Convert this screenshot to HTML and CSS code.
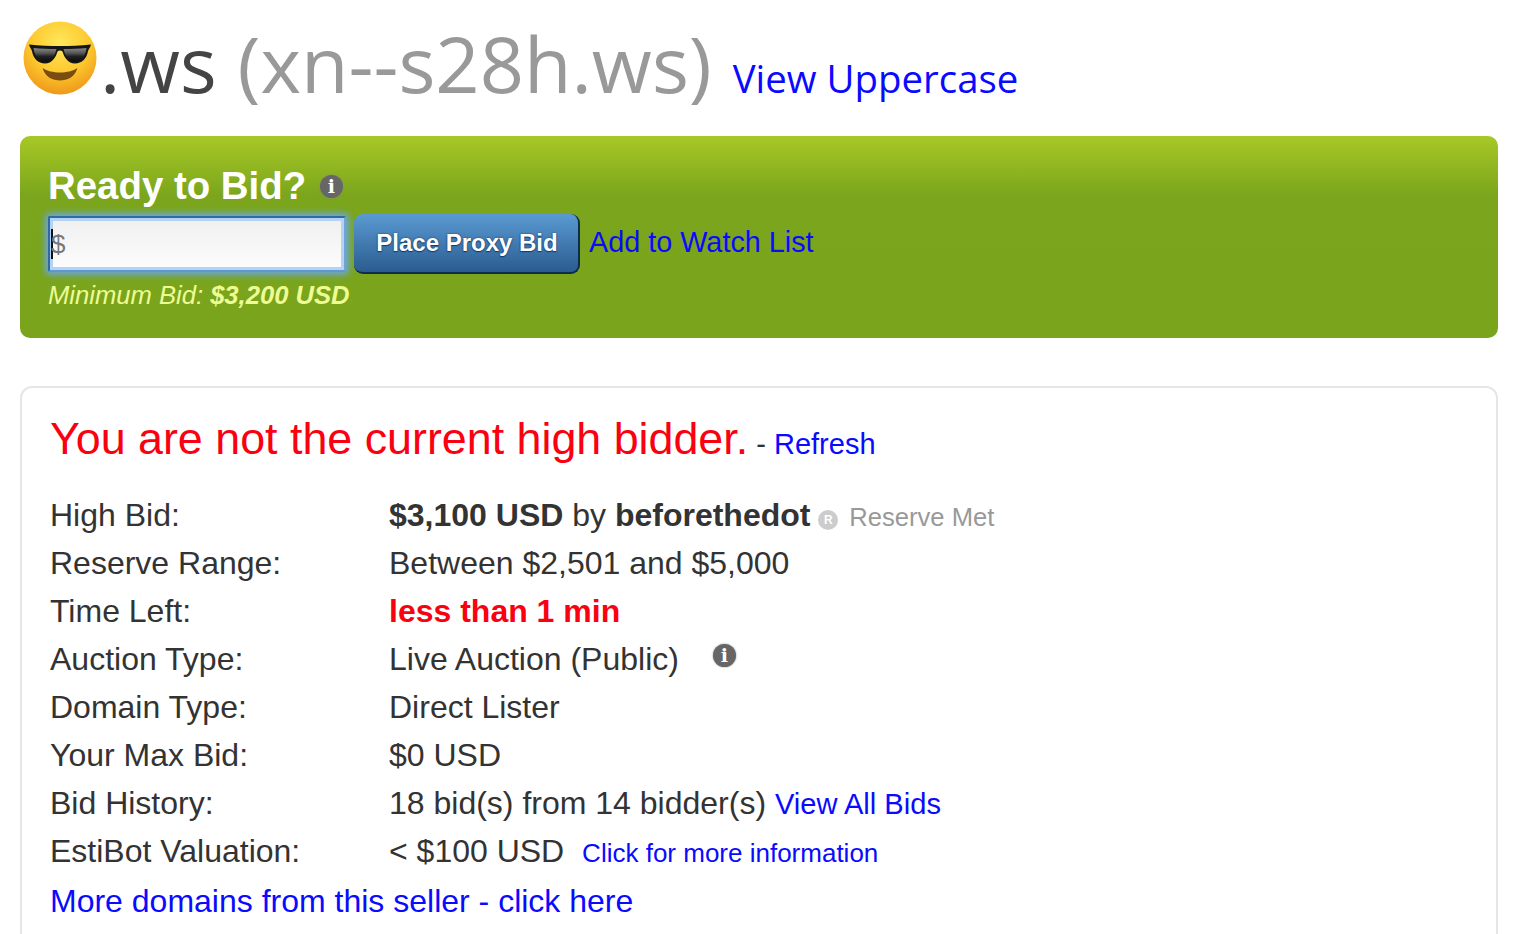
FILE: index.html
```html
<!DOCTYPE html>
<html lang="en">
<head>
<meta charset="utf-8">
<title>.ws auction</title>
<link rel="stylesheet" href="styles.css">
</head>
<body>
<h1 class="title">
  <svg class="emoji" viewBox="0 0 76 76" width="76" height="76" aria-hidden="true">
    <defs>
      <radialGradient id="face" cx="50%" cy="30%" r="72%">
        <stop offset="0" stop-color="#ffe85c"/>
        <stop offset="0.55" stop-color="#fdc92f"/>
        <stop offset="1" stop-color="#ee9518"/>
      </radialGradient>
      <linearGradient id="lens" x1="0" y1="0" x2="0" y2="1">
        <stop offset="0" stop-color="#8a8a8a"/>
        <stop offset="0.4" stop-color="#505050"/>
        <stop offset="0.6" stop-color="#222"/>
        <stop offset="1" stop-color="#0c0c0c"/>
      </linearGradient>
    </defs>
    <circle cx="38" cy="38" r="36.5" fill="url(#face)"/>
    <path d="M7 24.5 C28 26.5 48 26.5 69 24.5 C68.5 27 67 28.5 66 31 C65 38 60 43.5 53 43.5 C46 43.5 42 37 40.5 31.5 C39 30 37 30 35.5 31.5 C34 37 30 43.5 23 43.5 C16 43.5 11 38 10 31 C9 28.5 7.5 27 7 24.5Z" fill="#151515"/>
    <path d="M11.5 28 C18 28.8 27 29 34.5 29 C33 36 29 41.8 23 41.8 C17 41.8 12.5 36.5 11.5 28Z" fill="url(#lens)"/>
    <path d="M41.5 29 C49 29 58 28.8 64.5 28 C63.5 36.5 59 41.8 53 41.8 C47 41.8 43 36 41.5 29Z" fill="url(#lens)"/>
    <path d="M20.5 48 C29 54 47 54 55.5 48 C53 57 45 60.5 38 60.5 C31 60.5 23 57 20.5 48Z" fill="#7a4c10"/>
  </svg><span class="domain">.ws</span>
  <span class="puny">(xn--s28h.ws)</span>
  <a class="upper" href="#">View Uppercase</a>
</h1>

<section class="bidbox">
  <h2 class="bidhead">Ready to Bid? <span class="info info-small">i</span></h2>
  <div class="bidrow">
    <div class="bidinput"><span class="caret"></span>$</div>
    <button class="bidbtn" type="button">Place Proxy Bid</button>
    <a class="watch" href="#">Add to Watch List</a>
  </div>
  <p class="minbid">Minimum Bid: <b>$3,200 USD</b></p>
</section>

<section class="card">
  <p class="status"><span class="notice">You are not the current high bidder.</span> <span class="dash">-</span> <a class="refresh" href="#">Refresh</a></p>
  <dl class="facts">
    <dt>High Bid:</dt>
    <dd><b>$3,100 USD</b> by <b>beforethedot</b> <span class="rmark">R</span> <span class="met">Reserve Met</span></dd>
    <dt>Reserve Range:</dt>
    <dd>Between $2,501 and $5,000</dd>
    <dt>Time Left:</dt>
    <dd><b class="urgent">less than 1 min</b></dd>
    <dt>Auction Type:</dt>
    <dd>Live Auction (Public) <span class="info info-large">i</span></dd>
    <dt>Domain Type:</dt>
    <dd>Direct Lister</dd>
    <dt>Your Max Bid:</dt>
    <dd>$0 USD</dd>
    <dt>Bid History:</dt>
    <dd>18 bid(s) from 14 bidder(s) <a class="inline-link" href="#">View All Bids</a></dd>
    <dt>EstiBot Valuation:</dt>
    <dd>&lt; $100 USD <a class="estibot" href="#">Click for more information</a></dd>
  </dl>
  <a class="more" href="#">More domains from this seller - click here</a>
</section>
</body>
</html>
```

FILE: styles.css
```css
html, body { height: 934px; overflow: hidden; }
body {
  margin: 0;
  padding: 0 22px 0 20px;
  background: #fff;
  font-family: "Liberation Sans", Arial, sans-serif;
  color: #333;
}
a { color: #0a0aff; text-decoration: none; }

.title {
  margin: 0;
  height: 136px;
  display: flex;
  align-items: baseline;
  font-family: "Open Sans", sans-serif;
  font-weight: 400;
  font-size: 77px;
  line-height: 126px;
  white-space: nowrap;
}
.emoji { align-self: flex-start; margin: 20px 2px 0 2px; flex: none; }
.domain { color: #444; }
.puny { color: #999; margin-left: 21px; font-size: 77.5px; }
.upper { font-size: 38.4px; margin-left: 21px; }

.bidbox {
  height: 202px;
  box-sizing: border-box;
  padding: 27px 28px 0;
  border-radius: 10px;
  background: linear-gradient(#a8c826 0, #7aa51c 60px, #79a41c 100%);
}
.bidhead {
  margin: 0;
  height: 46px;
  font-size: 38.4px;
  line-height: 46px;
  font-weight: 700;
  color: #fff;
  display: flex;
  align-items: center;
  gap: 3px;
  white-space: pre;
}
.info {
  display: inline-flex;
  align-items: center;
  justify-content: center;
  border-radius: 50%;
  background: #666;
  color: #fff;
  font-family: "DejaVu Serif", serif;
  font-weight: 700;
  box-shadow: 0 0 2px #888;
}
.info-small { width: 23px; height: 23px; font-size: 19px; }
.info-large { width: 23px; height: 23px; font-size: 19px; margin-left: 25px; vertical-align: 8px; }

.bidrow { display: flex; align-items: center; height: 60px; margin-top: 5px; }
.bidinput {
  width: 298px;
  height: 56px;
  box-sizing: border-box;
  border: 2px solid #2f6aa8;
  border-right-color: #6fa3da;
  border-bottom-color: #5f97d2;
  box-shadow: 0 0 6px 3px #6da5dc, inset 0 0 0 3px #b4d3f2;
  border-radius: 2px;
  background: linear-gradient(#efeff0, #fdfdfe);
  color: #777;
  font-size: 26px;
  line-height: 52px;
  padding-left: 1px;
  display: flex;
}
.caret { width: 2px; height: 30px; background: #111; margin: 11px -2px 0 0; }
.bidbtn {
  width: 226px;
  height: 60px;
  margin-left: 8px;
  padding: 0 0 0 2px;
  border: 0;
  border-bottom: 2px solid #0d2d4d;
  border-right: 2px solid #0d2d4d;
  border-radius: 9px;
  background: linear-gradient(#5b9ad3, #2a5c8f);
  color: #fff;
  font-family: "Liberation Sans", Arial, sans-serif;
  font-weight: 700;
  font-size: 24px;
  text-shadow: 0 0 2px #123d6b, 0 1px 1px #123d6b;
}
.watch { font-size: 28.8px; margin-left: 9px; margin-top: -4px; }
.minbid {
  margin: 5px 0 0;
  font-size: 25.6px;
  line-height: 32px;
  font-style: italic;
  color: #eefc95;
}

.card {
  margin-top: 48px;
  height: 700px;
  box-sizing: border-box;
  padding: 20px 28px 0;
  border: 2px solid #e6e6e6;
  border-radius: 12px;
}
.status { margin: 0; height: 64px; line-height: 60px; font-size: 29px; white-space: nowrap; }
.notice { color: #fa0010; font-size: 44.8px; }
.dash { color: #333; }
.refresh { font-size: 29px; }

.facts {
  margin: 19px 0 0;
  display: grid;
  grid-template-columns: 339px 1fr;
  grid-auto-rows: 48px;
  font-size: 32px;
  line-height: 48px;
}
.facts dt, .facts dd { margin: 0; white-space: nowrap; }
.urgent { color: #fa0010; }
.rmark {
  display: inline-flex;
  align-items: center;
  justify-content: center;
  width: 20px;
  height: 20px;
  margin-left: -1px;
  border-radius: 50%;
  background: #ccc;
  color: #fff;
  font-size: 12px;
  font-weight: 700;
  vertical-align: 2px;
}
.met { color: #999; font-size: 25.6px; margin-left: 2px; }
.inline-link { font-size: 29.1px; }
.estibot { font-size: 26px; margin-left: 9px; }
.more { display: block; font-size: 32px; line-height: 52px; }
```
